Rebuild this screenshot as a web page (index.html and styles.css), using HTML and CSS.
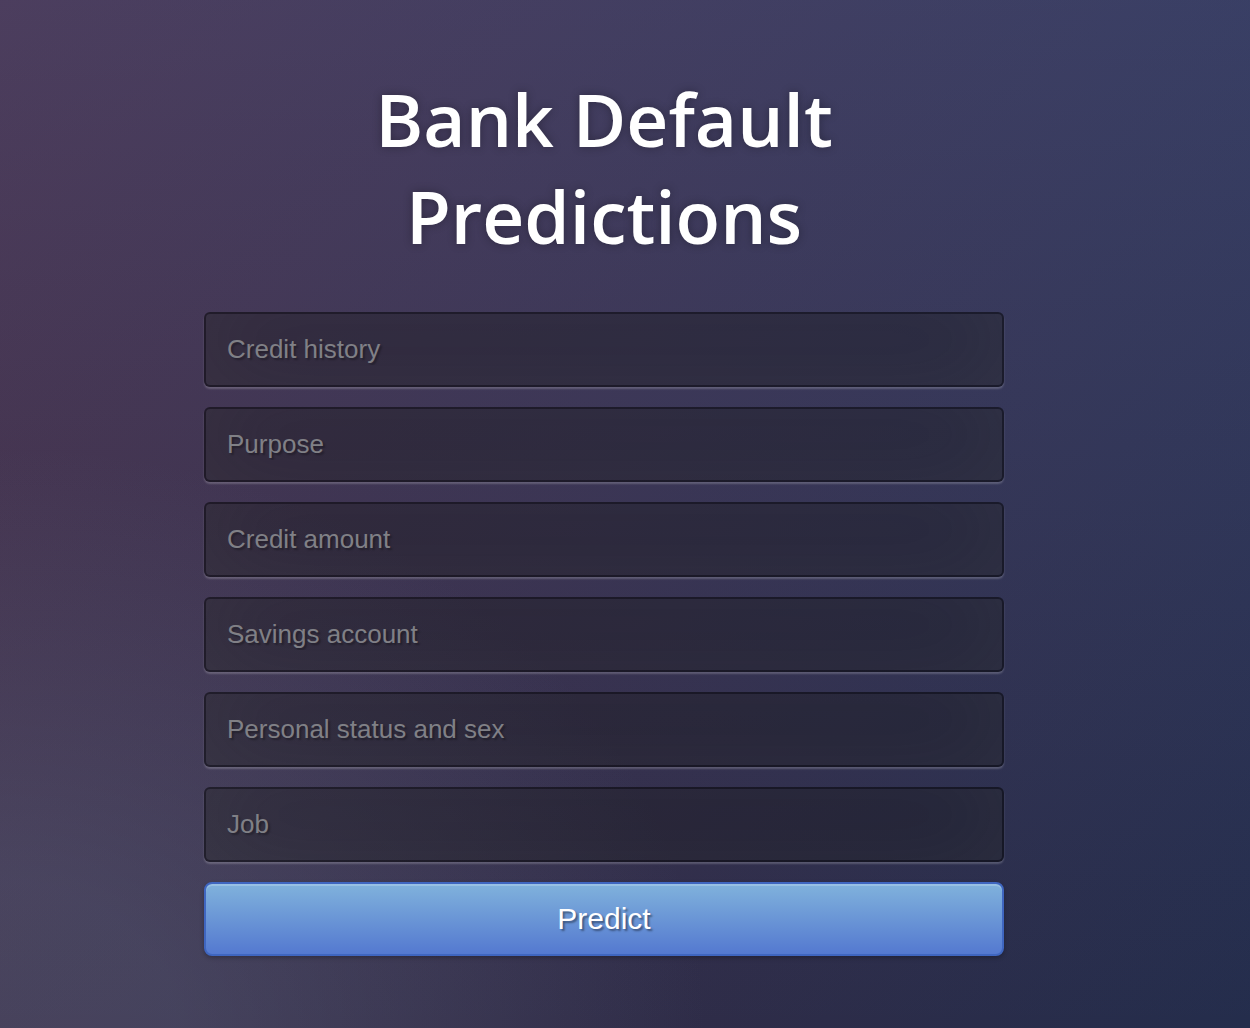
FILE: index.html
```html
<!DOCTYPE html>
<html lang="en">
<head>
<meta charset="utf-8">
<title>Bank Default Predictions</title>
<link rel="stylesheet" href="styles.css">
</head>
<body>
<div class="login">
  <h1 class="title">Bank Default Predictions</h1>
  <form class="form">
    <input class="field" type="text" placeholder="Credit history">
    <input class="field" type="text" placeholder="Purpose">
    <input class="field" type="text" placeholder="Credit amount">
    <input class="field" type="text" placeholder="Savings account">
    <input class="field" type="text" placeholder="Personal status and sex">
    <input class="field" type="text" placeholder="Job">
    <button class="btn" type="button">Predict</button>
  </form>
</div>
</body>
</html>
```

FILE: styles.css
```css
html {
  width: 100%;
  height: 100%;
  overflow: hidden;
}
body {
  margin: 0;
  width: 100%;
  height: 100%;
  font-family: "Open Sans", sans-serif;
  background: #2c3050;
  background:
    radial-gradient(ellipse farthest-corner at 0% 100%, rgba(100,120,150,.3) 10%, rgba(100,120,150,0) 40%),
    linear-gradient(to bottom, rgba(67,141,230,.2) 0%, rgba(67,141,230,0) 100%),
    linear-gradient(135deg, #4e2a3c 0%, #242d4c 100%);
}
.login {
  width: 800px;
  margin-left: 204px;
  padding-top: 70px;
}
.title {
  margin: 0 0 48px;
  color: #fff;
  font-family: "Open Sans", sans-serif;
  font-weight: 600;
  font-size: 73px;
  line-height: 97px;
  letter-spacing: 0;
  text-align: center;
  text-shadow: 0 0 10px rgba(0,0,0,0.3);
}
.form {
  display: flex;
  flex-direction: column;
  gap: 20px;
}
.field {
  box-sizing: border-box;
  width: 800px;
  height: 75px;
  margin: 0;
  padding: 0 21px;
  background: rgba(0,0,0,0.3);
  border: 2px solid rgba(0,0,0,0.3);
  border-radius: 6px;
  outline: none;
  font-family: "Liberation Sans", Arial, sans-serif;
  font-size: 26px;
  color: #fff;
  text-shadow: 2px 2px 2px rgba(0,0,0,0.3);
  box-shadow: inset 0 -10px 90px rgba(100,100,100,0.2), 0 2px 2px rgba(255,255,255,0.2);
}
.field::placeholder {
  color: #808086;
}
.btn {
  box-sizing: border-box;
  width: 800px;
  height: 74px;
  margin: 0;
  padding: 0;
  font-family: "Liberation Sans", Arial, sans-serif;
  font-size: 30px;
  color: #fff;
  text-align: center;
  text-shadow: 2px 2px 2px rgba(0,0,0,0.4);
  background-color: #5479d0;
  background-image: linear-gradient(to bottom, #80b2dc, #5479d0);
  border: 2px solid #3f66c0;
  border-radius: 8px;
  box-shadow: inset 0 2px 0 rgba(255,255,255,.2), 0 2px 4px rgba(0,0,0,.25);
  cursor: pointer;
}
```
